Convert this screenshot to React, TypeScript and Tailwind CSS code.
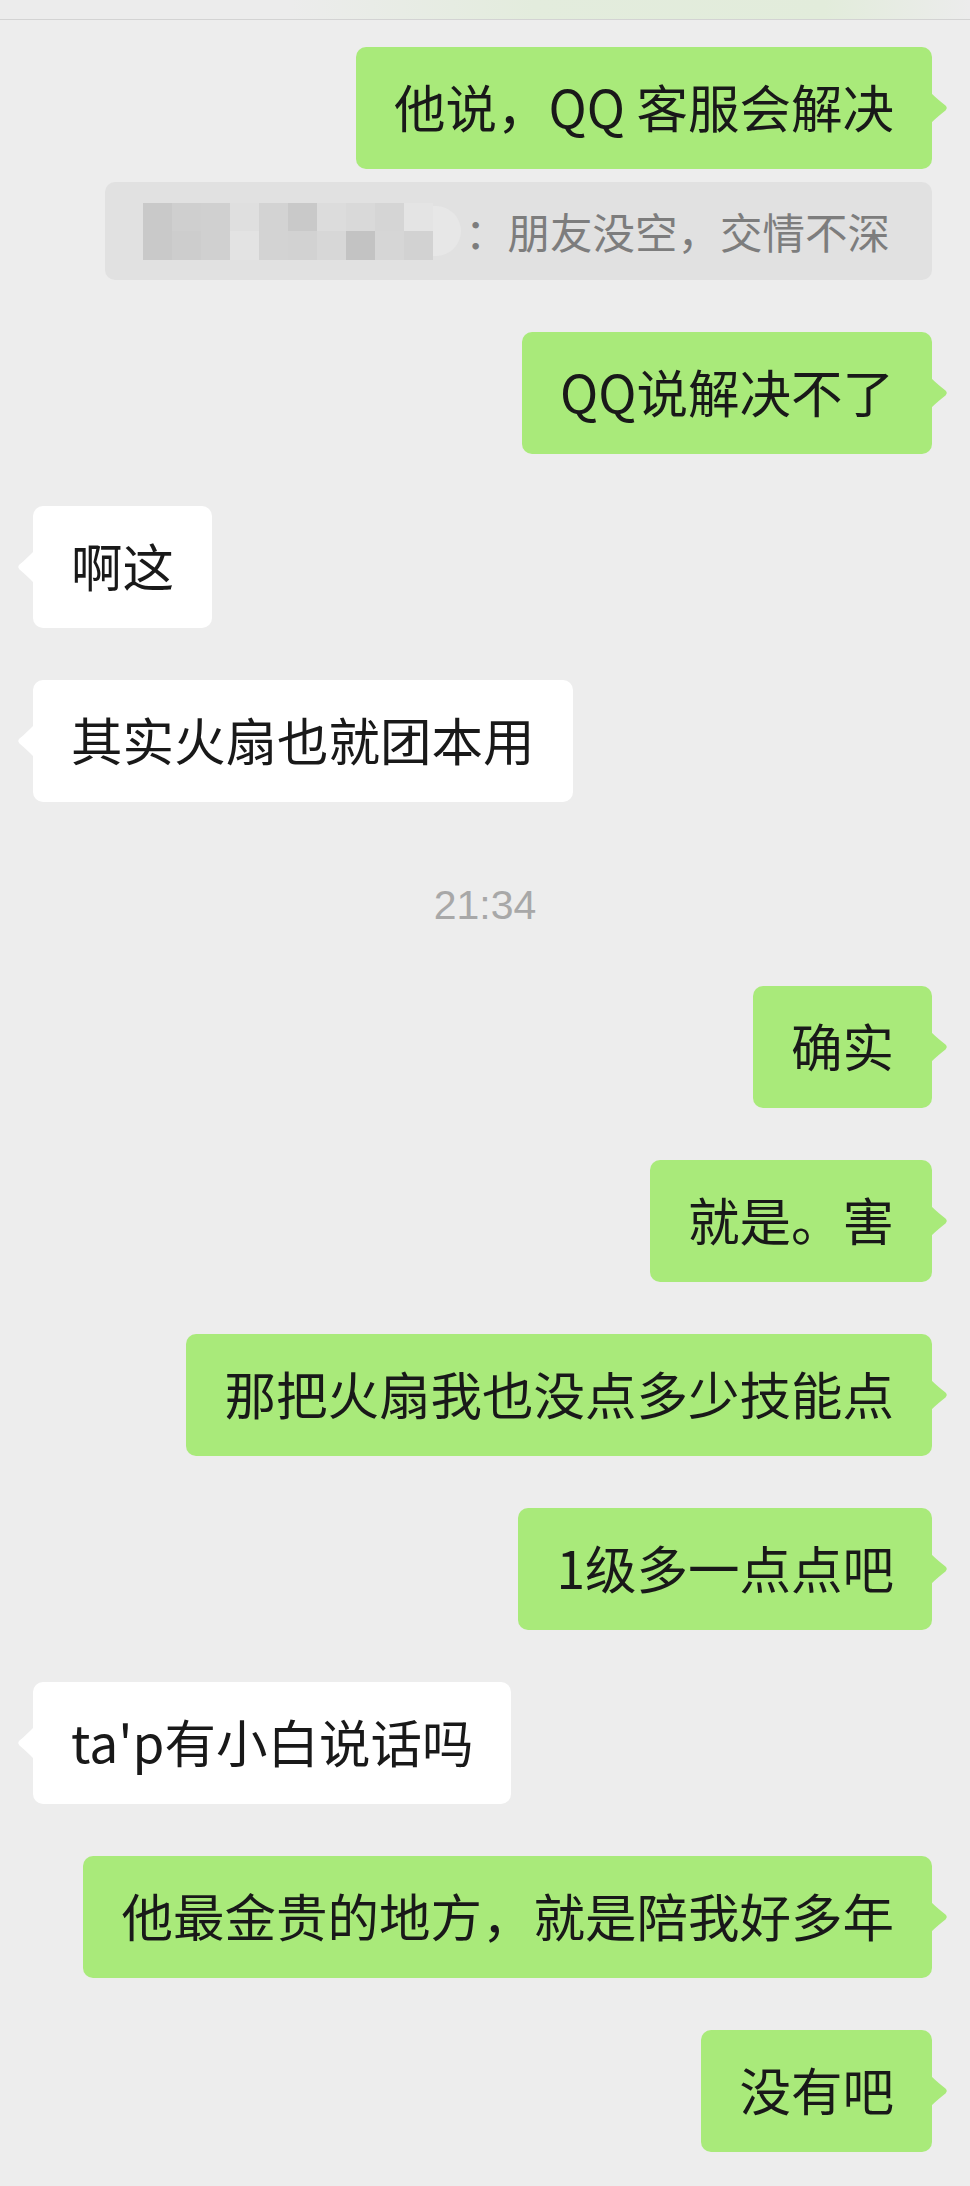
import React from 'react';

type Msg = { text: string; mine?: boolean };

const Tail: React.FC<{ mine?: boolean }> = ({ mine }) => {
  if (mine) {
    return (
      <svg
        className="absolute left-full top-1/2 -ml-px -translate-y-1/2"
        width="17"
        height="30"
        viewBox="0 0 17 30"
      >
        <path d="M0 0 C5 5 10 9 14.5 12.6 Q17 15 14.5 17.4 C10 21 5 25 0 30 Z" fill="#a9ea7a" />
      </svg>
    );
  }
  return (
    <svg
      className="absolute right-full top-1/2 -mr-px -translate-y-1/2"
      width="17"
      height="32"
      viewBox="0 0 17 32"
    >
      <path d="M17 0 C12 5 7 10 2.5 13.6 Q0 16 2.5 18.4 C7 22 12 27 17 32 Z" fill="#ffffff" />
    </svg>
  );
};

const Bubble: React.FC<Msg & { className?: string }> = ({ text, mine, className }) => {
  return (
    <div className={`flex ${mine ? 'justify-end pr-[38px]' : 'justify-start pl-[33px]'} ${className ?? ''}`}>
      <div
        className={`relative whitespace-nowrap rounded-[10px] px-[38px] pt-[33px] pb-[37px] text-[51.5px] leading-[52px] text-[#191919] ${
          mine ? 'bg-[#a9ea7a]' : 'bg-white'
        }`}
      >
        {text}
        <Tail mine={mine} />
      </div>
    </div>
  );
};

// mosaic blocks over the quoted name
const row1 = [
  'bg-[#c9c9c9]',
  'bg-[#cfcfcf]',
  'bg-[#d0d0d0]',
  'bg-[#dfdfdf]',
  'bg-[#d3d3d3]',
  'bg-[#c9c9c9]',
  'bg-[#dcdcdc]',
  'bg-[#d9d9d9]',
  'bg-[#d5d5d5]',
  'bg-[#e4e4e4]',
];
const row2 = [
  'bg-[#c9c9c9]',
  'bg-[#cdcdcd]',
  'bg-[#d0d0d0]',
  'bg-[#e3e3e3]',
  'bg-[#d3d3d3]',
  'bg-[#d2d2d2]',
  'bg-[#d7d7d7]',
  'bg-[#c3c3c3]',
  'bg-[#d6d6d6]',
  'bg-[#d2d2d2]',
];

const Quote: React.FC = () => {
  return (
    <div className="mt-[13px] flex justify-end pr-[38px]">
      <div className="flex h-[98px] w-[827px] items-center rounded-[10px] bg-[#e1e1e1] pl-[38px]">
        <div className="flex items-center">
          <div className="flex flex-col">
            <div className="flex">
              {row1.map((c, i) => (
                <div key={i} className={`h-[28px] w-[29px] ${c}`} />
              ))}
            </div>
            <div className="flex">
              {row2.map((c, i) => (
                <div key={i} className={`h-[29px] w-[29px] ${c}`} />
              ))}
            </div>
          </div>
          <div className="h-[50px] w-[28px] rounded-r-full bg-[#e7e7e7]" />
        </div>
        <span className="ml-[4px] whitespace-nowrap text-[42.5px] leading-[48px] text-[#7d7d7d]">
          ：朋友没空，交情不深
        </span>
      </div>
    </div>
  );
};

export default function App() {
  return (
    <div className="min-h-[2186px] w-full bg-[#ededed] font-['Noto_Sans_CJK_SC',sans-serif]">
      <div className="h-[20px] border-b border-[#d3d3d3] bg-[linear-gradient(90deg,#ececec_30%,#e3ecdd_55%,#e2ecdb_85%,#ececec_100%)]" />
      <div className="flex flex-col pt-[27px]">
        <Bubble mine text="他说，QQ 客服会解决" />
        <Quote />
        <Bubble mine text="QQ说解决不了" className="mt-[52px]" />
        <Bubble text="啊这" className="mt-[52px]" />
        <Bubble text="其实火扇也就团本用" className="mt-[52px]" />
        <div className="mt-[79px] text-center font-['Liberation_Sans',sans-serif] text-[41px] leading-[48px] text-[#a8a8a8]">
          21:34
        </div>
        <Bubble mine text="确实" className="mt-[57px]" />
        <Bubble mine text="就是。害" className="mt-[52px]" />
        <Bubble mine text="那把火扇我也没点多少技能点" className="mt-[52px]" />
        <Bubble mine text="1级多一点点吧" className="mt-[52px]" />
        <Bubble text="ta'p有小白说话吗" className="mt-[52px]" />
        <Bubble mine text="他最金贵的地方，就是陪我好多年" className="mt-[52px]" />
        <Bubble mine text="没有吧" className="mt-[52px]" />
      </div>
    </div>
  );
}
